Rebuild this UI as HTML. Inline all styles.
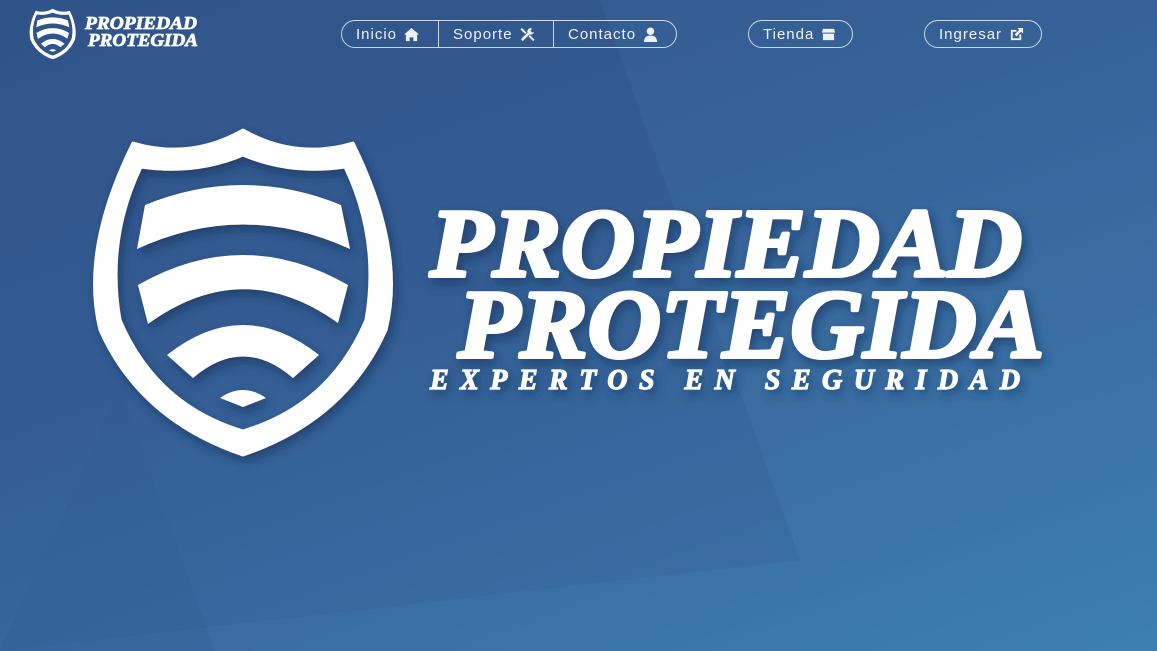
<!DOCTYPE html>
<html><head><meta charset="utf-8"><style>
*{margin:0;padding:0;box-sizing:border-box}
body{width:1157px;height:651px;overflow:hidden;position:relative;font-family:"Liberation Sans",sans-serif;
background:linear-gradient(160deg,#30548a 0%,#355f95 40%,#3a6fa3 70%,#3d80b0 100%);}
.poly{position:absolute;inset:0}
.nav{position:absolute;top:20px;height:28px;border:1px solid rgba(230,238,248,.85);border-radius:14px;display:flex;align-items:center;color:#eef3f9;font-size:15px;letter-spacing:1px}
.nav span{display:flex;align-items:center;height:100%;padding:0 14px;gap:7px}
.nav span+span{border-left:1px solid rgba(230,238,248,.85)}
svg.i{width:15px;height:15px;fill:#eef3f9}
</style></head><body>
<svg class="poly" width="1157" height="651">
<polygon points="0,0 600,0 800,560 0,651" fill="#2f5386" opacity=".15"/>
<polygon points="120,390 0,651 215,651" fill="#2e5a8e" opacity=".25"/>
<polygon points="600,0 1157,0 1157,420 800,560" fill="#4079ac" opacity=".12"/>
</svg>
<svg style="position:absolute;left:27px;top:8px" width="52" height="52" viewBox="90 125 310 335">
<path fill="#fff" fill-rule="evenodd" d="M243,130 Q190,160 133,143 Q80,250 100,330 Q140,420 243,455 Q346,420 386,330 Q406,250 353,143 Q296,160 243,130Z M243,155 Q290,175 345,167 Q380,240 366,320 Q330,405 243,431 Q156,405 120,320 Q106,240 141,167 Q196,175 243,155Z"/>
<path fill="#fff" d="M145,205 Q243,165 341,205 L350,249 Q243,200 137,249Z M138,285 Q243,225 348,285 L338,323 Q243,255 148,324Z M167,355 Q243,295 319,355 L293,378 Q243,335 193,378Z M220,398 Q243,382 266,398 L243,407Z"/>
</svg>
<svg style="position:absolute;left:84px;top:14px" width="120" height="36">
<g fill="#fff" stroke="#fff" stroke-width=".8" font-family="Liberation Serif" font-weight="bold" font-style="italic" font-size="18">
<text x="1" y="15" textLength="112" lengthAdjust="spacingAndGlyphs">PROPIEDAD</text>
<text x="4" y="32" textLength="110" lengthAdjust="spacingAndGlyphs">PROTEGIDA</text></g></svg>
<div class="nav" style="left:341px;width:336px">
<span style="width:96px">Inicio <svg class="i" viewBox="0 0 16 16"><path d="M8 1 0 8h2v7h4v-4h4v4h4V8h2z"/></svg></span>
<span style="width:115px">Soporte <svg class="i" viewBox="0 0 16 16"><path d="M2 1l5 5-1.5 1.5-5-5zM11 1a4 4 0 0 0-3 5L1 13l2 2 7-7a4 4 0 0 0 5-3l-2 1-2-2 2-2zM9 10l5 5 1.5-1.5-5-5z"/></svg></span>
<span>Contacto <svg class="i" viewBox="0 0 16 16"><circle cx="8" cy="4.5" r="4"/><path d="M1 16q0-7 7-7t7 7z"/></svg></span>
</div>
<div class="nav" style="left:748px;width:105px"><span>Tienda <svg class="i" viewBox="0 0 16 16"><path d="M2 2h12l1 4H1zM2 7h12v7H2z"/></svg></span></div>
<div class="nav" style="left:924px;width:118px"><span>Ingresar <svg class="i" viewBox="0 0 16 16"><path d="M2 3h6v2H4v7h7V8h2v6H2zM9 1h6v6l-2-2-5 5-2-2 5-5z"/></svg></span></div>
<svg style="position:absolute;left:0;top:0" width="1157" height="651">
<defs><filter id="s" x="-20%" y="-20%" width="140%" height="140%"><feDropShadow dx="3" dy="5" stdDeviation="5" flood-color="#122a55" flood-opacity=".6"/></filter></defs>
<g filter="url(#s)" fill="#fff">
<path stroke="#fff" stroke-width="3" stroke-linejoin="round" d="M243,130 Q190,160 133,143 Q80,250 100,330 Q140,420 243,455 Q346,420 386,330 Q406,250 353,143 Q296,160 243,130Z M243,155 Q290,175 345,167 Q380,240 366,320 Q330,405 243,431 Q156,405 120,320 Q106,240 141,167 Q196,175 243,155Z" fill-rule="evenodd"/>
<path d="M145,205 Q243,165 341,205 L350,249 Q243,200 137,249Z M138,285 Q243,225 348,285 L338,323 Q243,255 148,324Z M167,355 Q243,295 319,355 L293,378 Q243,335 193,378Z M220,398 Q243,382 266,398 L243,407Z"/>
<g stroke="#fff" stroke-width="4" stroke-linejoin="round">
<text x="430" y="276" font-family="Liberation Serif" font-weight="bold" font-style="italic" font-size="98" textLength="592" lengthAdjust="spacingAndGlyphs">PROPIEDAD</text>
<text x="458" y="357" font-family="Liberation Serif" font-weight="bold" font-style="italic" font-size="98" textLength="586" lengthAdjust="spacingAndGlyphs">PROTEGIDA</text>
</g>
<text x="430" y="389" stroke="#fff" stroke-width="1.2" font-family="Liberation Serif" font-weight="bold" font-style="italic" font-size="28" textLength="590" lengthAdjust="spacing">EXPERTOS EN SEGURIDAD</text>
</g>
</svg>
</body></html>
